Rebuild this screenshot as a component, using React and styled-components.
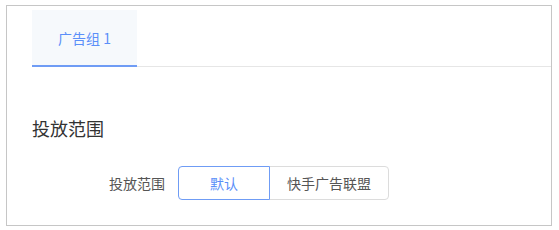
import React, { useState } from "react";
import styled, { createGlobalStyle } from "styled-components";

const GlobalStyle = createGlobalStyle`
  body {
    margin: 0;
    background: #fff;
    font-family: "Noto Sans CJK SC", "Noto Sans", sans-serif;
  }
`;

const Frame = styled.div`
  box-sizing: border-box;
  margin: 5px 0 0 6px;
  width: 546px;
  height: 221px;
  border: 1px solid #c6c6c6;
  background: #fff;
  padding: 4px 0 0 25px;
`;

const TabBar = styled.div`
  display: flex;
  border-bottom: 1px solid #e6e6e6;
`;

const Tab = styled.div`
  box-sizing: border-box;
  width: 105px;
  height: 57px;
  display: flex;
  align-items: center;
  justify-content: center;
  padding-top: 1px;
  font-size: 14px;
  color: ${(p) => (p.active ? "#5b8ff9" : "#555")};
  background: ${(p) => (p.active ? "#f6f9fc" : "transparent")};
  border-bottom: 2px solid ${(p) => (p.active ? "#6f9cf5" : "transparent")};
  margin-bottom: -1px;
  cursor: pointer;
`;

const Section = styled.div`
  padding-top: 49px;
`;

const Heading = styled.h3`
  margin: 0;
  font-size: 18px;
  font-weight: 400;
  color: #333;
  line-height: 24px;
`;

const Row = styled.div`
  display: flex;
  align-items: center;
  margin-top: 26px;
  padding-left: 77px;
`;

const Label = styled.span`
  font-size: 14px;
  color: #555;
  margin-right: 13px;
`;

const Group = styled.div`
  display: flex;
`;

const Option = styled.button`
  box-sizing: border-box;
  height: 34px;
  width: ${(p) => p.w}px;
  font-family: inherit;
  font-size: 14px;
  background: #fff;
  cursor: pointer;
  color: ${(p) => (p.active ? "#5b8ff9" : "#555")};
  border: 1px solid ${(p) => (p.active ? "#6f9cf5" : "#dcdcdc")};
  position: relative;
  z-index: ${(p) => (p.active ? 1 : 0)};
  &:first-child {
    border-radius: 4px 0 0 4px;
  }
  &:last-child {
    border-radius: 0 4px 4px 0;
    margin-left: -1px;
  }
`;

const options = [
  { key: "default", text: "默认", w: 92 },
  { key: "ks", text: "快手广告联盟", w: 120 },
];

export default function App() {
  const [value, setValue] = useState("default");
  return (
    <>
      <GlobalStyle />
      <Frame>
        <TabBar>
          <Tab active>广告组 1</Tab>
        </TabBar>
        <Section>
          <Heading>投放范围</Heading>
          <Row>
            <Label>投放范围</Label>
            <Group>
              {options.map((o) => (
                <Option
                  key={o.key}
                  w={o.w}
                  active={value === o.key}
                  onClick={() => setValue(o.key)}
                >
                  {o.text}
                </Option>
              ))}
            </Group>
          </Row>
        </Section>
      </Frame>
    </>
  );
}
